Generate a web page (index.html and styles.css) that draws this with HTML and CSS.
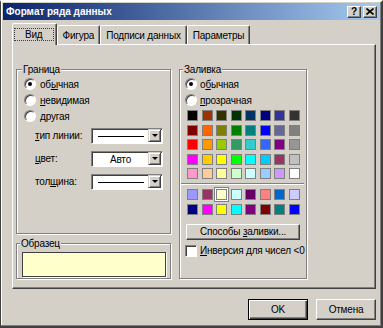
FILE: index.html
```html
<!DOCTYPE html>
<html lang="ru">
<head>
    <meta charset="UTF-8">
    <title>Формат ряда данных</title>
    <link rel="stylesheet" href="styles.css">
</head>
<body>

<div class="window">
    <div class="titlebar">
        <span class="title">Формат ряда данных</span>
        <div class="tb-buttons">
            <span class="tb-btn">?</span>
            <span class="tb-btn">
                <svg width="8" height="7" viewBox="0 0 8 7"><path d="M0.5 0.5 L7.5 6.5 M7.5 0.5 L0.5 6.5" stroke="#000" stroke-width="1.6"/></svg>
            </span>
        </div>
    </div>

    <div class="content">
        <div class="tabs">
            <div class="tab active"><span class="focus">Вид</span></div>
            <div class="tab">Фигура</div>
            <div class="tab">Подписи данных</div>
            <div class="tab">Параметры</div>
        </div>

        <div class="panel">
            <div class="left-col">
                <fieldset class="group border-group">
                    <legend>Граница</legend>
                    <div class="option"><span class="radio checked"></span><span>об<u>ы</u>чная</span></div>
                    <div class="option"><span class="radio"></span><span><u>н</u>евидимая</span></div>
                    <div class="option"><span class="radio"></span><span><u>д</u>ругая</span></div>

                    <div class="field">
                        <span class="field-label"><u>т</u>ип линии:</span>
                        <div class="combo"><span class="combo-line"></span><span class="combo-btn"></span></div>
                    </div>
                    <div class="field">
                        <span class="field-label"><u>ц</u>вет:</span>
                        <div class="combo"><span class="combo-text">Авто</span><span class="combo-btn"></span></div>
                    </div>
                    <div class="field">
                        <span class="field-label">тол<u>щ</u>ина:</span>
                        <div class="combo"><span class="combo-line"></span><span class="combo-btn"></span></div>
                    </div>
                </fieldset>

                <fieldset class="group sample-group">
                    <legend>Образец</legend>
                    <div class="sample"></div>
                </fieldset>
            </div>

            <fieldset class="group fill-group">
                <legend>Заливка</legend>
                <div class="option"><span class="radio checked"></span><span>о<u>б</u>ычная</span></div>
                <div class="option"><span class="radio"></span><span><u>п</u>розрачная</span></div>

                <div class="palette">
                    <span style="background:#000000"></span>
                    <span style="background:#993300"></span>
                    <span style="background:#333300"></span>
                    <span style="background:#003300"></span>
                    <span style="background:#003366"></span>
                    <span style="background:#000080"></span>
                    <span style="background:#333399"></span>
                    <span style="background:#333333"></span>

                    <span style="background:#800000"></span>
                    <span style="background:#ff6600"></span>
                    <span style="background:#808000"></span>
                    <span style="background:#008000"></span>
                    <span style="background:#008080"></span>
                    <span style="background:#0000ff"></span>
                    <span style="background:#666699"></span>
                    <span style="background:#808080"></span>

                    <span style="background:#ff0000"></span>
                    <span style="background:#ff9900"></span>
                    <span style="background:#99cc00"></span>
                    <span style="background:#339966"></span>
                    <span style="background:#33cccc"></span>
                    <span style="background:#3366ff"></span>
                    <span style="background:#800080"></span>
                    <span style="background:#969696"></span>

                    <span style="background:#ff00ff"></span>
                    <span style="background:#ffcc00"></span>
                    <span style="background:#ffff00"></span>
                    <span style="background:#00ff00"></span>
                    <span style="background:#00ffff"></span>
                    <span style="background:#00ccff"></span>
                    <span style="background:#993366"></span>
                    <span style="background:#c0c0c0"></span>

                    <span style="background:#ff99cc"></span>
                    <span style="background:#ffcc99"></span>
                    <span style="background:#ffff99"></span>
                    <span style="background:#ccffcc"></span>
                    <span style="background:#ccffff"></span>
                    <span style="background:#99ccff"></span>
                    <span style="background:#cc99ff"></span>
                    <span style="background:#ffffff"></span>
                </div>

                <div class="separator"></div>

                <div class="palette">
                    <span style="background:#9999ff"></span>
                    <span style="background:#993366"></span>
                    <span class="selected" style="background:#ffffcc"></span>
                    <span style="background:#ccffff"></span>
                    <span style="background:#660066"></span>
                    <span style="background:#ff8080"></span>
                    <span style="background:#0066cc"></span>
                    <span style="background:#ccccff"></span>

                    <span style="background:#000080"></span>
                    <span style="background:#ff00ff"></span>
                    <span style="background:#ffff00"></span>
                    <span style="background:#00ffff"></span>
                    <span style="background:#800080"></span>
                    <span style="background:#800000"></span>
                    <span style="background:#008080"></span>
                    <span style="background:#0000ff"></span>
                </div>

                <button class="btn fill-btn">Способы <u>з</u>аливки...</button>

                <div class="option check-row"><span class="checkbox"></span><span><u>И</u>нверсия для чисел &lt;0</span></div>
            </fieldset>
        </div>

        <div class="actions">
            <button class="btn default">OK</button>
            <button class="btn">Отмена</button>
        </div>
    </div>
</div>

</body>
</html>
```

FILE: styles.css
```css
* {
    box-sizing: border-box;
}
body {
    margin: 0;
    background-color: #d4d0c8;
    font-family: "Liberation Sans", Arial, sans-serif;
    font-size: 10px;
    letter-spacing: -0.2px;
    color: #000;
}
u {
    text-decoration: underline;
    text-underline-offset: 1px;
}

/* window frame */
.window {
    width: 383px;
    height: 328px;
    border: 2px solid;
    border-color: #fff #404040 #404040 #fff;
    border-left: 1px solid #404040;
    box-shadow: inset -1px -1px #808080, inset 1px 0 #fff;
    padding: 1px 1px 1px 2px;
    background-color: #d4d0c8;
}
.titlebar {
    height: 17px;
    display: flex;
    align-items: center;
    justify-content: space-between;
    padding: 0 3px 0 3px;
    background: linear-gradient(to right, #0a246a, #a6caf0);
}
.title {
    color: #fff;
    font-weight: bold;
    font-size: 10px;
    letter-spacing: 0;
}
.tb-buttons {
    display: flex;
    gap: 2px;
}
.tb-btn {
    width: 14px;
    height: 12px;
    display: flex;
    align-items: center;
    justify-content: center;
    background-color: #d4d0c8;
    border: 1px solid;
    border-color: #fff #404040 #404040 #fff;
    box-shadow: inset -1px -1px #808080;
    font-weight: bold;
    font-size: 10px;
    line-height: 1;
}

.content {
    padding: 2px 4px 0 9px;
}

/* tabs */
.tabs {
    display: flex;
    align-items: flex-end;
    height: 22px;
    position: relative;
    z-index: 1;
}
.tab {
    height: 19px;
    padding: 4px 5px 0 5px;
    border: 1px solid;
    border-bottom: none;
    border-color: #fff #404040 transparent #fff;
    box-shadow: inset -1px 0 #808080;
    border-radius: 2px 2px 0 0;
    background-color: #d4d0c8;
}
.tab.active {
    height: 22px;
    padding: 5px 3px 0 2px;
    margin-bottom: -1px;
}
.focus {
    display: inline-block;
    outline: 1px dotted #404040;
    outline-offset: 0;
    padding: 0 10px;
    line-height: 11px;
}

/* panel */
.panel {
    height: 245px;
    border: 1px solid;
    border-color: #fff #404040 #404040 #fff;
    box-shadow: inset -1px -1px #808080;
    padding: 18px 0 0 3px;
    display: grid;
    grid-template-columns: 155px 128px;
    column-gap: 8px;
    align-items: start;
}
.left-col {
    display: flex;
    flex-direction: column;
    gap: 3px;
}

/* group boxes */
.group {
    margin: 0;
    border: 1px solid #808080;
    box-shadow: inset 1px 1px #fff, 1px 1px #fff;
    padding: 0 6px 0 7px;
    min-width: 0;
}
.group legend {
    padding: 0 1px;
    margin-left: -2px;
    line-height: 13px;
    background-color: #d4d0c8;
}
.border-group {
    height: 171px;
}
.sample-group {
    height: 42px;
    padding: 1px 4px 0 5px;
}
.fill-group {
    height: 216px;
    padding: 0 6px 0 5px;
}

.option {
    height: 16px;
    display: flex;
    align-items: center;
    gap: 4px;
    white-space: nowrap;
}
.fill-group .option {
    gap: 3px;
}
.radio {
    width: 12px;
    height: 12px;
    flex: none;
    border-radius: 50%;
    background-color: #fff;
    border: 1px solid;
    border-color: #808080 #fff #fff #808080;
    box-shadow: inset 1px 1px #404040;
    display: flex;
    align-items: center;
    justify-content: center;
}
.radio.checked::after {
    content: "";
    width: 4px;
    height: 4px;
    border-radius: 50%;
    background-color: #000;
}
.checkbox {
    width: 12px;
    height: 12px;
    flex: none;
    background-color: #fff;
    border: 1px solid;
    border-color: #808080 #fff #fff #808080;
    box-shadow: inset 1px 1px #404040;
}

/* combos */
.field {
    height: 23px;
    display: flex;
    align-items: center;
    padding-left: 11px;
}
.field-label {
    width: 56px;
}
.combo {
    width: 72px;
    height: 16px;
    background-color: #fff;
    border: 1px solid;
    border-color: #808080 #fff #fff #808080;
    box-shadow: inset 1px 1px #404040;
    display: flex;
    align-items: center;
    padding: 1px 1px 0 1px;
}
.combo-line {
    flex: 1;
    height: 1px;
    background-color: #000;
    margin: 0 4px 0 5px;
}
.combo-text {
    flex: 1;
    text-align: center;
}
.combo-btn {
    width: 13px;
    height: 13px;
    margin-top: -1px;
    background-color: #d4d0c8;
    border: 1px solid;
    border-color: #d4d0c8 #404040 #404040 #d4d0c8;
    box-shadow: inset 1px 1px #fff, inset -1px -1px #808080;
    display: flex;
    align-items: center;
    justify-content: center;
}
.combo-btn::after {
    content: "";
    border-left: 3px solid transparent;
    border-right: 3px solid transparent;
    border-top: 3px solid #000;
}

.sample {
    height: 25px;
    background-color: #ffffcc;
    border: 1px solid #404040;
    box-shadow: 1px 1px #fff;
    margin-top: 1px;
}

/* palette */
.palette {
    display: grid;
    grid-template-columns: repeat(8, 11px);
    grid-auto-rows: 11px;
    column-gap: 3.5px;
    row-gap: 3.5px;
    margin-top: 2px;
    padding-left: 2px;
}
.palette span {
    border: 1px solid #808080;
}
.palette span.selected {
    outline: 1px solid #808080;
    outline-offset: 1px;
    box-shadow: 0 0 0 1px #fff;
}
.separator {
    height: 2px;
    border-top: 1px solid #808080;
    border-bottom: 1px solid #fff;
    margin: 4px -4px 4px -4px;
}

/* buttons */
.btn {
    font-family: "Liberation Sans", Arial, sans-serif;
    font-size: 10px;
    letter-spacing: -0.2px;
    color: #000;
    background-color: #d4d0c8;
    border: 1px solid;
    border-color: #fff #404040 #404040 #fff;
    box-shadow: inset -1px -1px #808080;
    padding: 0;
}
.fill-btn {
    display: block;
    width: 114px;
    height: 16px;
    margin: 9px 0 3px 1px;
}

.actions {
    display: flex;
    justify-content: flex-end;
    gap: 8px;
    margin-top: 10px;
}
.actions .btn {
    width: 60px;
    height: 21px;
}
.btn.default {
    border: 1px solid #000;
    box-shadow: inset 1px 1px #fff, inset -1px -1px #404040, inset -2px -2px #808080;
}
```
